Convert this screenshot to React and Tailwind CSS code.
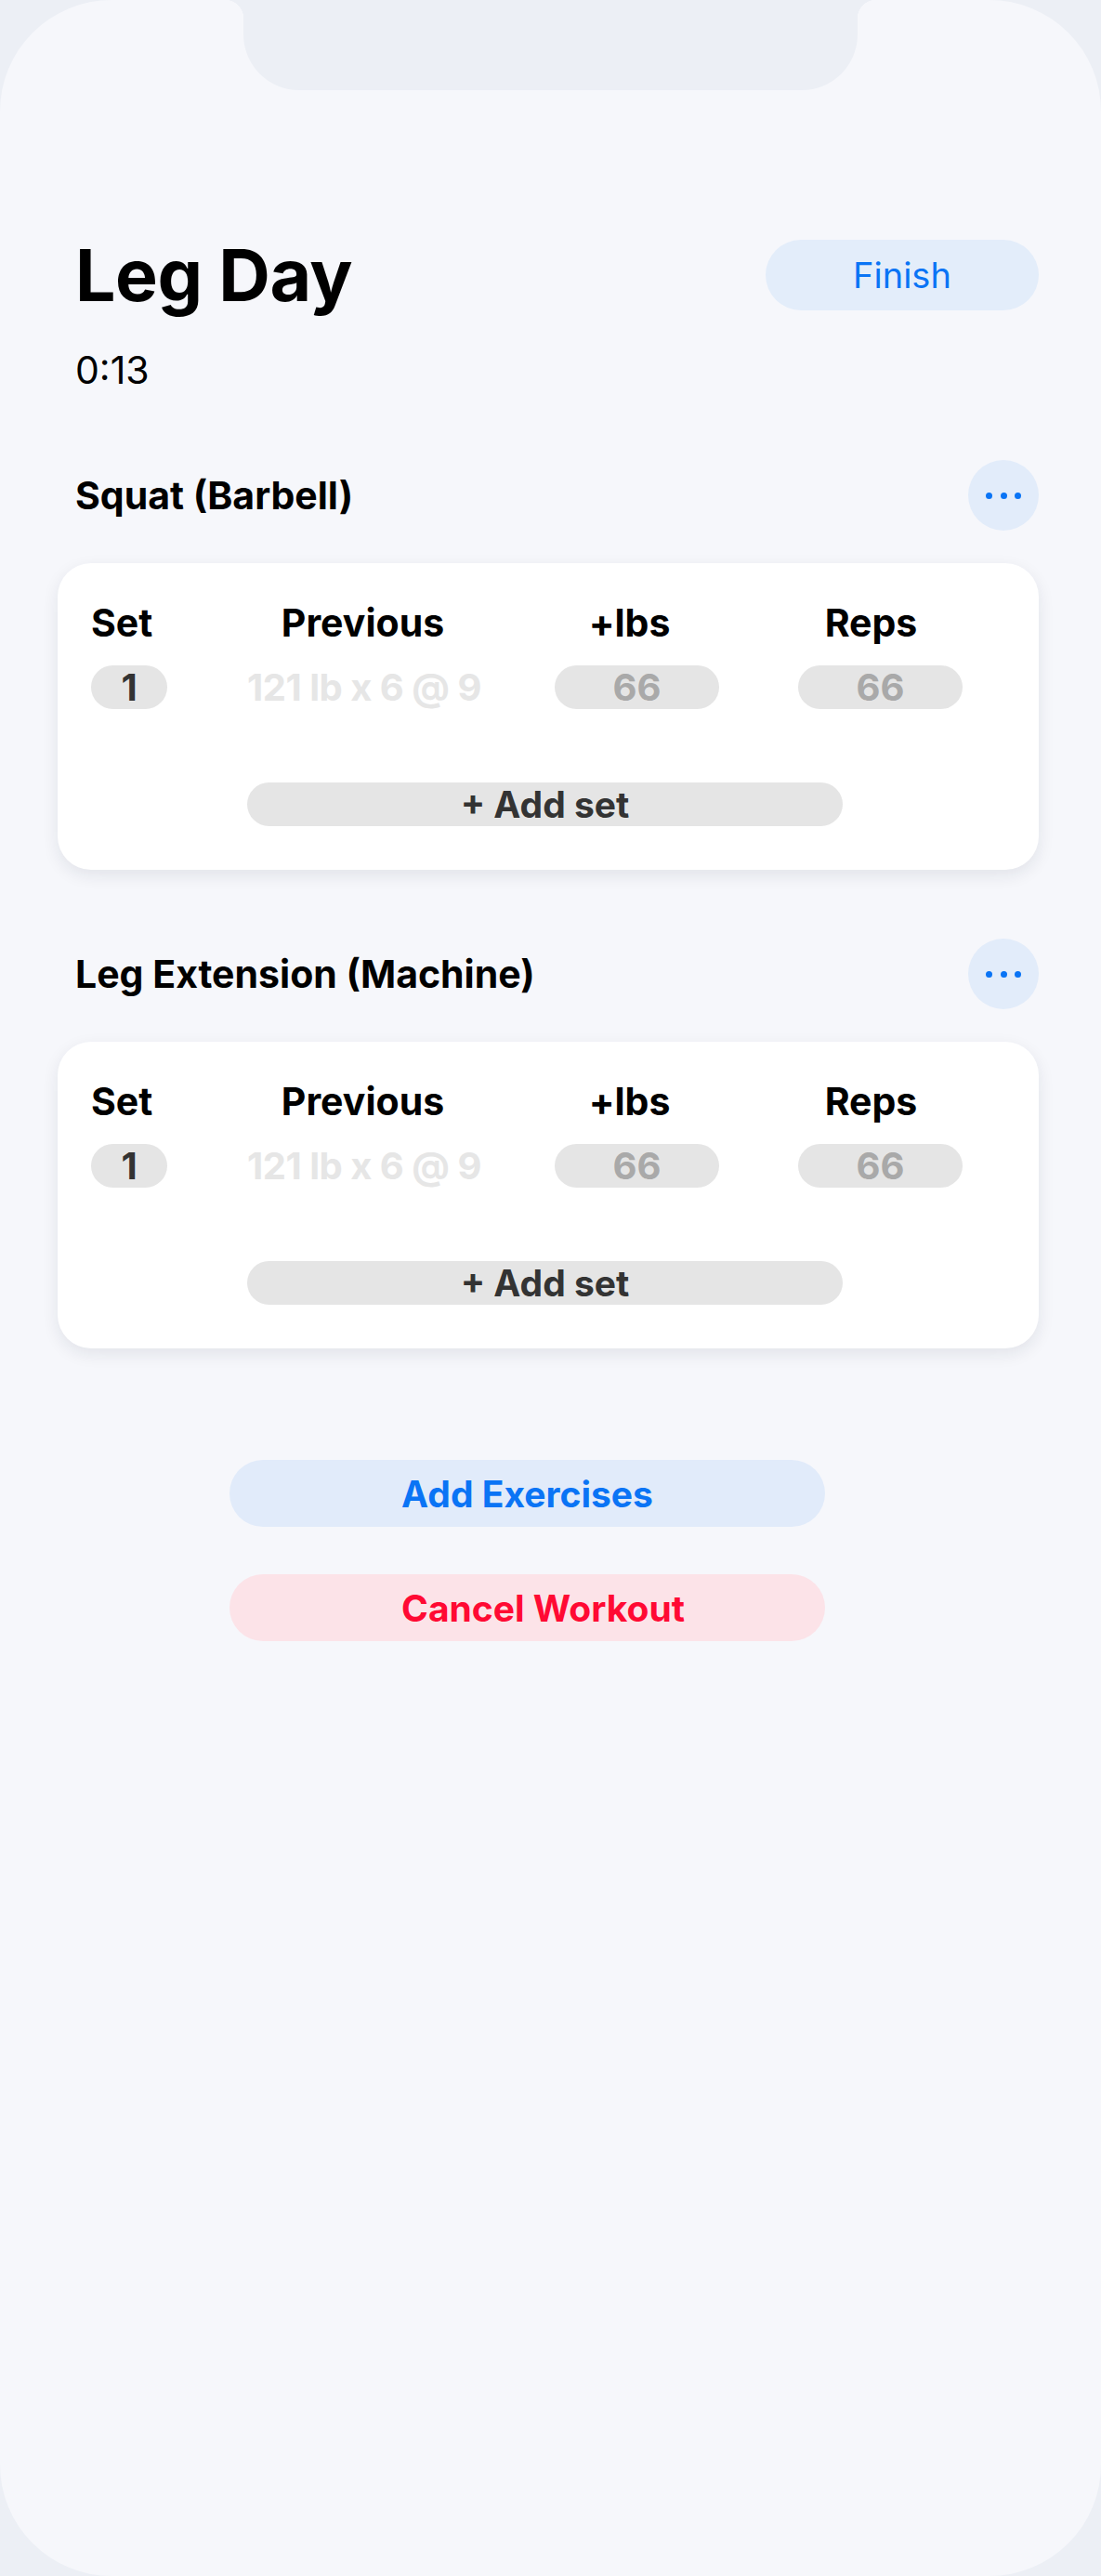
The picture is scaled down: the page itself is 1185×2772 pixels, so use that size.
import React from "react";

const exercises = [
  { name: "Squat (Barbell)", sets: [{ n: 1, prev: "121 lb x 6 @ 9", lbs: "66", reps: "66" }] },
  { name: "Leg Extension (Machine)", sets: [{ n: 1, prev: "121 lb x 6 @ 9", lbs: "66", reps: "66" }] },
];

const MoreButton = () => (
  <button className="w-[76px] h-[76px] rounded-full bg-[#e2ecfa] flex items-center justify-center gap-[8.5px] shrink-0">
    <span className="w-[7px] h-[7px] rounded-full bg-[#0a74f5]" />
    <span className="w-[7px] h-[7px] rounded-full bg-[#0a74f5]" />
    <span className="w-[7px] h-[7px] rounded-full bg-[#0a74f5]" />
  </button>
);

const ExerciseBlock = ({ exercise }) => (
  <div>
    {/* exercise header */}
    <div className="flex items-center pl-[19px] h-[76px]">
      <h2 className="text-[41px] font-bold text-black leading-none">{exercise.name}</h2>
      <div className="ml-auto">
        <MoreButton />
      </div>
    </div>

    {/* sets card */}
    <div className="mt-[35px] bg-white rounded-[36px] shadow-[0_6px_18px_rgba(20,30,60,0.09)] pt-[40px] pb-[47px] pl-[36px]">
      <div className="flex items-center h-[48px] text-[41px] font-bold text-black leading-[48px]">
        <div className="w-[82px]">Set</div>
        <div className="ml-[86px] w-[249px] text-center">Previous</div>
        <div className="ml-[82px] w-[177px] text-center pr-[16px]">+lbs</div>
        <div className="ml-[85px] w-[177px] text-center pr-[20px]">Reps</div>
      </div>

      {exercise.sets.map((s) => (
        <div key={s.n} className="flex items-center mt-[22px] text-[40px] font-bold leading-none">
          <div className="w-[82px] h-[47px] rounded-full bg-[#e5e5e5] flex items-center justify-center text-[#333333]">{s.n}</div>
          <div className="ml-[86px] w-[249px] text-center text-[#e6e6e6] whitespace-nowrap tracking-[-0.5px]">{s.prev}</div>
          <div className="ml-[82px] w-[177px] h-[47px] rounded-full bg-[#e5e5e5] flex items-center justify-center text-[#a9a9a9]">{s.lbs}</div>
          <div className="ml-[85px] w-[177px] h-[47px] rounded-full bg-[#e5e5e5] flex items-center justify-center text-[#a9a9a9]">{s.reps}</div>
        </div>
      ))}

      <button className="mt-[79px] ml-[168px] w-[641px] h-[47px] rounded-full bg-[#e5e5e5] flex items-center justify-center text-[39px] font-bold text-[#333333] leading-none">
        + Add set
      </button>
    </div>
  </div>
);

export default function App() {
  return (
    <div className="relative w-[1185px] h-[2772px] bg-[#eceff5] overflow-hidden font-['Inter','Liberation_Sans',sans-serif]">
      <div className="w-full h-full rounded-[120px] bg-[#f6f7fb] pt-[258px] pl-[62px] pr-[67px]">
        {/* title row */}
        <div className="flex items-center pl-[19px] h-[76px]">
          <h1 className="text-[77px] font-bold text-black leading-none tracking-[-0.5px]">Leg Day</h1>
          <button className="ml-auto w-[294px] h-[76px] rounded-full bg-[#e3edfa] text-[#0a74f5] text-[38px] leading-none">
            Finish
          </button>
        </div>
        <div className="pl-[19px] mt-[40px] text-[41px] leading-[48px] text-black">0:13</div>

        <div className="mt-[73px] flex flex-col gap-[74px]">
          {exercises.map((ex) => (
            <ExerciseBlock key={ex.name} exercise={ex} />
          ))}
        </div>

        <div className="mt-[120px] ml-[185px] w-[641px] flex flex-col gap-[51px]">
          <button className="h-[72px] rounded-full bg-[#e1ebfa] text-[#0a74f5] text-[39px] font-bold leading-none">
            Add Exercises
          </button>
          <button className="h-[72px] rounded-full bg-[#fce3e8] text-[#ff0a33] text-[39px] font-bold leading-none pl-[34px]">
            Cancel Workout
          </button>
        </div>
      </div>

      {/* notch */}
      <div className="absolute top-0 left-[262px] w-[661px] h-[97px] bg-[#eceff5] rounded-b-[60px]" />
      <div className="absolute top-0 left-[242px] w-[20px] h-[20px] bg-[radial-gradient(circle_at_0_100%,transparent_20px,#eceff5_20.5px)]" />
      <div className="absolute top-0 left-[923px] w-[20px] h-[20px] bg-[radial-gradient(circle_at_100%_100%,transparent_20px,#eceff5_20.5px)]" />
    </div>
  );
}
